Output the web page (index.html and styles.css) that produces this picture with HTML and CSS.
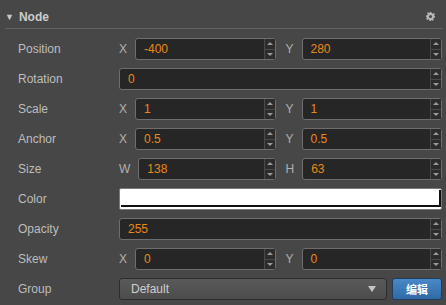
FILE: index.html
```html
<!DOCTYPE html>
<html lang="en">
<head>
    <meta charset="UTF-8">
    <title>Node Inspector</title>
    <link rel="stylesheet" href="styles.css">
</head>
<body>
    <div class="panel">
        <div class="header">
            <span class="fold">&#9660;</span>
            <span class="title">Node</span>
            <svg class="gear" width="9" height="9" viewBox="0 0 10 10">
                <path d="M4 0h2l.3 1.4 1.2.6 1.2-.8 1.1 1.1-.8 1.2.6 1.2L10 4v2l-1.4.3-.6 1.2.8 1.2-1.1 1.1-1.2-.8-1.2.6L6 10H4l-.3-1.4-1.2-.6-1.2.8L.2 7.7l.8-1.2-.6-1.2L0 6V4l1.4-.3.6-1.2-.8-1.2L2.3.2l1.2.8 1.2-.6z" fill="#b8b8b8"/>
                <circle cx="5" cy="5" r="1.7" fill="#474747"/>
            </svg>
        </div>

        <div class="props">
            <div class="row">
                <div class="label">Position</div>
                <div class="half"><span class="axis">X</span><div class="num"><span class="val">-400</span><span class="spin"><i class="up"></i><i class="down"></i></span></div></div>
                <div class="half"><span class="axis">Y</span><div class="num"><span class="val">280</span><span class="spin"><i class="up"></i><i class="down"></i></span></div></div>
            </div>
            <div class="row">
                <div class="label">Rotation</div>
                <div class="num"><span class="val">0</span><span class="spin"><i class="up"></i><i class="down"></i></span></div>
            </div>
            <div class="row">
                <div class="label">Scale</div>
                <div class="half"><span class="axis">X</span><div class="num"><span class="val">1</span><span class="spin"><i class="up"></i><i class="down"></i></span></div></div>
                <div class="half"><span class="axis">Y</span><div class="num"><span class="val">1</span><span class="spin"><i class="up"></i><i class="down"></i></span></div></div>
            </div>
            <div class="row">
                <div class="label">Anchor</div>
                <div class="half"><span class="axis">X</span><div class="num"><span class="val">0.5</span><span class="spin"><i class="up"></i><i class="down"></i></span></div></div>
                <div class="half"><span class="axis">Y</span><div class="num"><span class="val">0.5</span><span class="spin"><i class="up"></i><i class="down"></i></span></div></div>
            </div>
            <div class="row">
                <div class="label">Size</div>
                <div class="half"><span class="axis">W</span><div class="num"><span class="val">138</span><span class="spin"><i class="up"></i><i class="down"></i></span></div></div>
                <div class="half"><span class="axis">H</span><div class="num"><span class="val">63</span><span class="spin"><i class="up"></i><i class="down"></i></span></div></div>
            </div>
            <div class="row">
                <div class="label">Color</div>
                <div class="color"><div class="swatch"></div></div>
            </div>
            <div class="row">
                <div class="label">Opacity</div>
                <div class="num"><span class="val">255</span><span class="spin"><i class="up"></i><i class="down"></i></span></div>
            </div>
            <div class="row">
                <div class="label">Skew</div>
                <div class="half"><span class="axis">X</span><div class="num"><span class="val">0</span><span class="spin"><i class="up"></i><i class="down"></i></span></div></div>
                <div class="half"><span class="axis">Y</span><div class="num"><span class="val">0</span><span class="spin"><i class="up"></i><i class="down"></i></span></div></div>
            </div>
            <div class="row">
                <div class="label">Group</div>
                <div class="select"><span>Default</span><i class="caret"></i></div>
                <button class="edit">编辑</button>
            </div>
        </div>
    </div>
</body>
</html>
```

FILE: styles.css
```css
body {
    margin: 0;
    background-color: #474747;
    font-family: "Liberation Sans", Arial, sans-serif;
    font-size: 12px;
    color: #bdbdbd;
}

.panel {
    width: 446px;
    height: 305px;
    overflow: hidden;
}

.header {
    display: flex;
    align-items: center;
    height: 23px;
    padding-top: 5px;
    margin: 0 3px 0 5px;
    border-bottom: 1px solid #626262;
}

.fold {
    font-size: 9px;
    color: #c8c8c8;
    margin-right: 5px;
}

.title {
    font-weight: bold;
    color: #cccccc;
    flex: 1;
}

.gear {
    margin-right: 8px;
}

.props {
    padding: 5px 4px 0 18px;
}

.row {
    display: flex;
    align-items: center;
    height: 30px;
}

.label {
    width: 101px;
    flex: none;
}

.half {
    flex: 1;
    display: flex;
    align-items: center;
    min-width: 0;
}

.half + .half {
    margin-left: 10px;
}

.axis {
    margin-right: 8px;
    color: #b0b0b0;
}

.num {
    flex: 1;
    display: flex;
    height: 20px;
    border: 1px solid #6e6e6e;
    border-radius: 3px;
    background-color: #262626;
    min-width: 0;
}

.val {
    flex: 1;
    padding-left: 8px;
    line-height: 20px;
    color: #e9891c;
}

.spin {
    width: 10px;
    display: flex;
    flex-direction: column;
    border-left: 1px solid #4a4a4a;
    background-color: #2c2c2c;
}

.spin i {
    flex: 1;
    display: flex;
    align-items: center;
    justify-content: center;
}

.spin .up {
    border-bottom: 1px solid #4a4a4a;
}

.spin .up::after {
    content: "";
    border-left: 3px solid transparent;
    border-right: 3px solid transparent;
    border-bottom: 3px solid #9a9a9a;
}

.spin .down::after {
    content: "";
    border-left: 3px solid transparent;
    border-right: 3px solid transparent;
    border-top: 3px solid #9a9a9a;
}

.color {
    flex: 1;
    height: 17px;
    border: 1px solid #7a7a7a;
    border-radius: 2px;
    padding: 1px 0 2px 1px;
    background-color: #ffffff;
}

.swatch {
    box-sizing: border-box;
    height: 17px;
    border-bottom: 2px solid #111111;
    border-right: 2px solid #111111;
}

.select {
    flex: 1;
    display: flex;
    align-items: center;
    height: 20px;
    padding: 0 10px 0 11px;
    border: 1px solid #2c2c2c;
    border-radius: 3px;
    background: linear-gradient(#5a5a5a, #4c4c4c);
    color: #cfcfcf;
}

.select span {
    flex: 1;
}

.caret {
    border-left: 4px solid transparent;
    border-right: 4px solid transparent;
    border-top: 6px solid #c4c4c4;
}

.edit {
    width: 50px;
    height: 22px;
    margin-left: 5px;
    padding: 0;
    border: 1px solid #1f3d5e;
    border-radius: 3px;
    background: linear-gradient(#4889c8, #2f6aa6);
    color: #ffffff;
    font-family: "Noto Sans CJK SC", sans-serif;
    font-weight: bold;
    font-size: 11px;
}
```
